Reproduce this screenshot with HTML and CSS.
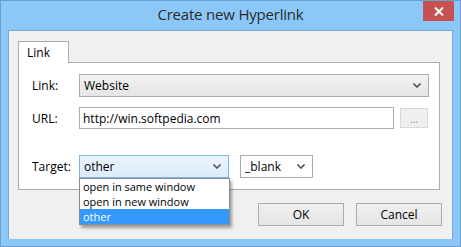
FILE: index.html
```html
<!DOCTYPE html>
<html lang="en">
<head>
  <meta charset="UTF-8" />
  <title>Create new Hyperlink</title>
  <link rel="stylesheet" href="styles.css">
</head>
<body>

<div class="window">
  <div class="titlebar">
    <span></span>
    <span class="title">Create new Hyperlink</span>
    <span class="close">
      <svg width="10" height="9" viewBox="0 0 10 9"><path d="M1 0.5 L9 8.5 M9 0.5 L1 8.5" stroke="#fff" stroke-width="2"/></svg>
    </span>
  </div>

  <div class="client">
    <div class="tabs"><div class="tab">Link</div></div>

    <div class="panel">
      <div class="row">
        <span class="label">Link:</span>
        <div class="select select-link">
          <span>Website</span>
          <svg class="chev" width="8" height="5" viewBox="0 0 8 5"><path d="M0.5 0.5 L4 4 L7.5 0.5" stroke="#555" stroke-width="1.6" fill="none"/></svg>
        </div>
      </div>

      <div class="row row-url">
        <span class="label">URL:</span>
        <div class="input">http://win.softpedia.com</div>
        <div class="browse">...</div>
      </div>

      <div class="row row-target">
        <span class="label">Target:</span>
        <div class="select select-target">
          <span>other</span>
          <svg class="chev" width="8" height="5" viewBox="0 0 8 5"><path d="M0.5 0.5 L4 4 L7.5 0.5" stroke="#555" stroke-width="1.6" fill="none"/></svg>
          <ul class="dropdown">
            <li>open in same window</li>
            <li>open in new window</li>
            <li class="active">other</li>
          </ul>
        </div>
        <div class="select select-blank">
          <span>_blank</span>
          <svg class="chev" width="8" height="5" viewBox="0 0 8 5"><path d="M0.5 0.5 L4 4 L7.5 0.5" stroke="#555" stroke-width="1.6" fill="none"/></svg>
        </div>
      </div>
    </div>

    <div class="buttons">
      <button>OK</button>
      <button>Cancel</button>
    </div>
  </div>
</div>

</body>
</html>
```

FILE: styles.css
```css
body { margin: 0; font-family: "Open Sans", "Noto Sans", sans-serif; font-size: 12px; color: #000; }

.window {
  width: 461px; height: 247px; box-sizing: border-box;
  background: #8cc8f7; border: 1px solid #6b9fce;
}

.titlebar { display: grid; grid-template-columns: 1fr auto 1fr; height: 29px; }
.title { font-size: 15px; color: #2b2b2b; padding-top: 3px; letter-spacing: -0.2px; }
.close {
  justify-self: end; margin-right: 6px; width: 31px; height: 20px;
  background: #c75050; display: flex; align-items: center; justify-content: center;
}

.client {
  margin: 0 7px; height: 209px; box-sizing: border-box;
  background: #f0f0f0; border: 1px solid #74aad8; border-width: 1px 1px 0 1px;
  padding: 10px 0 0 9px;
}

.tabs { display: flex; }
.tab {
  position: relative; z-index: 1;
  width: 51px; height: 22px; box-sizing: border-box;
  background: #fff; border: 1px solid #adadad; border-bottom: none;
  margin-bottom: -1px; padding: 2px 0 0 8px;
}

.panel {
  width: 422px; height: 128px; box-sizing: border-box;
  background: #fff; border: 1px solid #adadad;
  padding: 11px 0 0 13px;
}

.row { display: flex; align-items: center; }
.label { width: 47px; }
.row-url { margin-top: 10px; }
.row-target { margin-top: 26px; }

.select {
  position: relative; display: flex; align-items: center; justify-content: space-between;
  height: 23px; box-sizing: border-box; padding: 0 7px 0 4px;
  background: linear-gradient(#f2f2f2, #e5e5e5); border: 1px solid #acacac;
}
.select-link { width: 350px; }
.select-target {
  width: 150px; border-color: #7eb4ea;
  background: linear-gradient(#ecf4fc, #dcecfc);
}
.select-blank { width: 73px; margin-left: 11px; background: #fff; }

.input {
  width: 315px; height: 22px; box-sizing: border-box; padding: 2px 0 0 3px;
  border: 1px solid #abadb3;
}
.browse {
  width: 28px; height: 20px; box-sizing: border-box; margin-left: 6px;
  background: #efefef; border: 1px solid #d9d9d9; color: #8a8a9a;
  font-size: 10px; text-align: center; line-height: 20px;
}

.dropdown {
  position: absolute; left: -1px; top: 22px; z-index: 2;
  width: 151px; box-sizing: border-box; margin: 0; padding: 0;
  list-style: none; background: #fff; border: 1px solid #8c8c8c;
  box-shadow: 2px 3px 3px rgba(0, 0, 0, 0.35);
}
.dropdown li { height: 15px; line-height: 15px; padding-left: 3px; font-size: 11px; }
.dropdown li.active { background: #3399ff; color: #fff; }

.buttons { display: flex; justify-content: flex-end; gap: 12px; margin: 13px 10px 0 0; }
.buttons button {
  width: 86px; height: 23px; padding: 0;
  font: inherit; color: #000;
  background: linear-gradient(#f0f0f0, #e5e5e5); border: 1px solid #acacac;
}
```
